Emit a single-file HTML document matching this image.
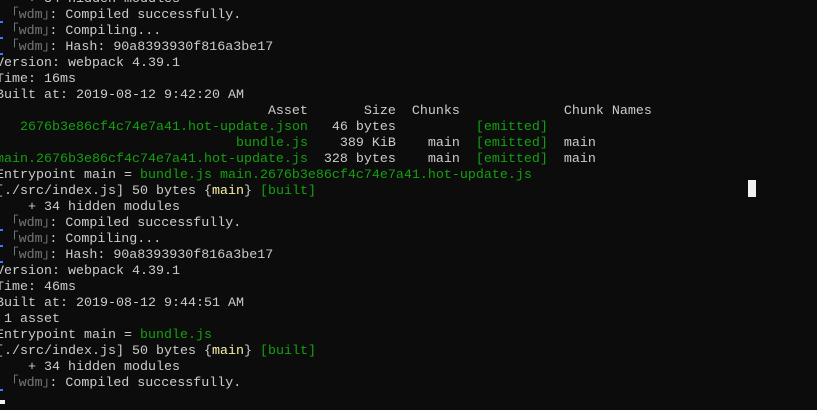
<!DOCTYPE html>
<html><head><meta charset="utf-8"><style>
html,body{margin:0;padding:0;background:#0c0c0c;width:817px;height:410px;overflow:hidden;position:relative}
pre{position:absolute;left:-4px;top:-8px;margin:0;font-family:"Liberation Mono","Noto Sans CJK SC",monospace;font-size:13.33px;line-height:16px;color:#cccccc;white-space:pre}
.g{color:#13a10e}
.y{color:#f9f1a5}
.d{color:#767676}
.i{position:absolute;left:0;width:3px;height:2px;background:#3b78ff}
.cur{position:absolute;background:#f2f2f2}
</style></head><body>
<pre>    + 34 hidden modules
  <span class="d">｢wdm｣</span>: Compiled successfully.
  <span class="d">｢wdm｣</span>: Compiling...
  <span class="d">｢wdm｣</span>: Hash: 90a8393930f816a3be17
Version: webpack 4.39.1
Time: 16ms
Built at: 2019-08-12 9:42:20 AM
                                  Asset       Size  Chunks             Chunk Names
   <span class="g">2676b3e86cf4c74e7a41.hot-update.json</span>   46 bytes          <span class="g">[emitted]</span>
                              <span class="g">bundle.js</span>    389 KiB    main  <span class="g">[emitted]</span>  main
<span class="g">main.2676b3e86cf4c74e7a41.hot-update.js</span>  328 bytes    main  <span class="g">[emitted]</span>  main
Entrypoint main = <span class="g">bundle.js main.2676b3e86cf4c74e7a41.hot-update.js</span>
[./src/index.js] 50 bytes {<span class="y">main</span>} <span class="g">[built]</span>
    + 34 hidden modules
  <span class="d">｢wdm｣</span>: Compiled successfully.
  <span class="d">｢wdm｣</span>: Compiling...
  <span class="d">｢wdm｣</span>: Hash: 90a8393930f816a3be17
Version: webpack 4.39.1
Time: 46ms
Built at: 2019-08-12 9:44:51 AM
 1 asset
Entrypoint main = <span class="g">bundle.js</span>
[./src/index.js] 50 bytes {<span class="y">main</span>} <span class="g">[built]</span>
    + 34 hidden modules
  <span class="d">｢wdm｣</span>: Compiled successfully.
</pre>
<div class="i" style="top:21px"></div>
<div class="i" style="top:37px"></div>
<div class="i" style="top:53px"></div>
<div class="i" style="top:229px"></div>
<div class="i" style="top:245px"></div>
<div class="i" style="top:261px"></div>
<div class="i" style="top:389px"></div>
<div class="cur" style="left:748px;top:180px;width:8px;height:17px"></div>
<div class="cur" style="left:0;top:400px;width:5px;height:4px"></div>
</body></html>
